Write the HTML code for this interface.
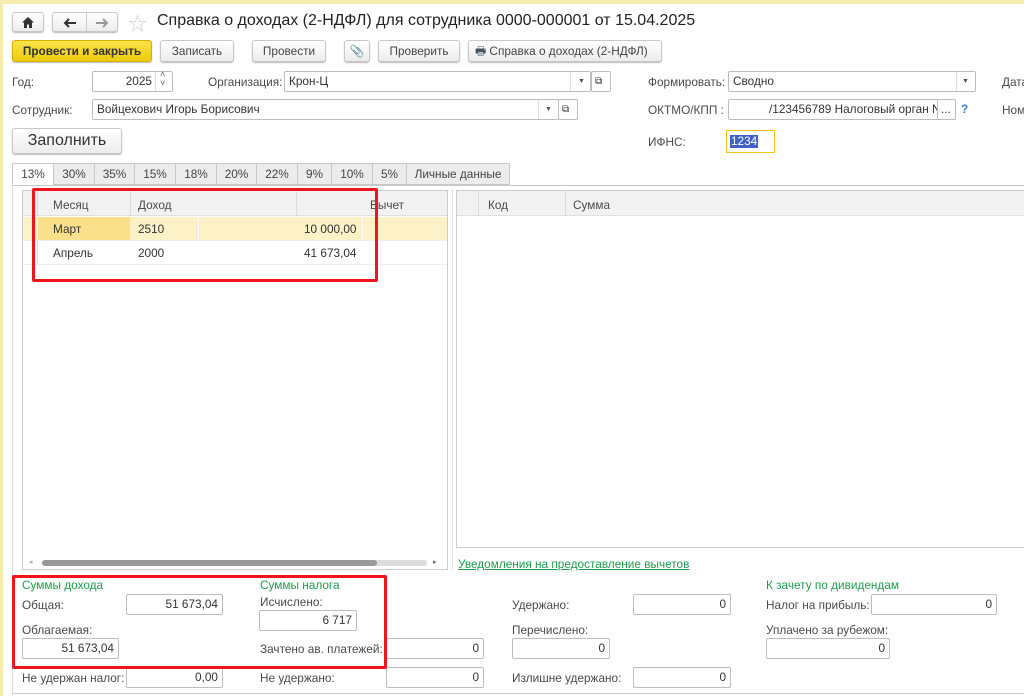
<!DOCTYPE html>
<html><head><meta charset="utf-8"><style>
*{box-sizing:border-box;margin:0;padding:0}
body{width:1024px;height:696px;overflow:hidden;background:#fff;font-family:"Liberation Sans","Noto Sans CJK SC",sans-serif;font-size:11.8px;color:#4a4a4a;position:relative}
.a{position:absolute;white-space:nowrap}
.btn{position:absolute;border:1px solid #c8c8c8;border-radius:3px;background:linear-gradient(#fff,#ececec);box-shadow:0 1px 1px #bbb;text-align:center;color:#444;font-size:11.8px;line-height:20px}
.inp{position:absolute;border:1px solid #bdbdbd;border-radius:2px;background:#fff;height:21px;line-height:19px;padding:0 4px;color:#333;font-size:11.8px;overflow:hidden}
.r{text-align:right}
.g{color:#1e9c4c}
.tab{position:absolute;top:163px;height:22px;border:1px solid #c8c8c8;background:#ececec;text-align:center;line-height:20px;color:#444}
.red{position:absolute;border:3px solid #f0141e;border-radius:2px}
.dd{position:absolute;font-size:7px;color:#555}
</style></head><body>
<div class="a" style="left:0;top:0;width:1024px;height:4px;background:#f6ebb0"></div>
<div class="a" style="left:0;top:0;width:3px;height:696px;background:#f6ebb0"></div>

<div class="btn" style="left:12px;top:12px;width:32px;height:20px"><svg width="12" height="11" viewBox="0 0 12 11" style="margin-top:4px"><path d="M6 0L0 5.5h2V11h3V7.5h2V11h3V5.5h2z" fill="#333"/></svg></div>
<div class="btn" style="left:52px;top:12px;width:66px;height:20px"><svg width="14" height="10" viewBox="0 0 14 10" style="position:absolute;left:10px;top:5px"><path d="M13 5H2M6 1L2 5l4 4" stroke="#333" stroke-width="2" fill="none"/></svg><span style="position:absolute;left:33px;top:0;width:1px;height:18px;background:#ccc"></span><svg width="14" height="10" viewBox="0 0 14 10" style="position:absolute;left:42px;top:5px"><path d="M1 5h11M8 1l4 4-4 4" stroke="#999" stroke-width="2" fill="none"/></svg></div>
<div class="a" style="left:128px;top:9px;font-size:19px;color:#cfcfcf">☆</div>
<div class="a" style="left:157px;top:12px;font-size:16px;color:#222">Справка о доходах (2-НДФЛ) для сотрудника 0000-000001 от 15.04.2025</div>

<div class="btn" style="left:12px;top:40px;width:140px;height:22px;background:linear-gradient(#fbe24a,#eccb0a);border-color:#d4b200;color:#333;font-weight:bold">Провести и закрыть</div>
<div class="btn" style="left:160px;top:40px;width:74px;height:22px">Записать</div>
<div class="btn" style="left:252px;top:40px;width:74px;height:22px">Провести</div>
<div class="btn" style="left:344px;top:40px;width:26px;height:22px;color:#777">&#128206;</div>
<div class="btn" style="left:378px;top:40px;width:82px;height:22px">Проверить</div>
<div class="btn" style="left:468px;top:40px;width:194px;height:22px;text-align:left;padding-left:6px"><span style="color:#456">&#128438;</span> Справка о доходах (2-НДФЛ)</div>

<div class="a" style="left:12px;top:75px">Год:</div>
<div class="inp r" style="left:92px;top:71px;width:81px;padding-right:20px">2025</div>
<div class="a" style="left:155px;top:72px;width:1px;height:19px;background:#ddd"></div>
<div class="a" style="left:160px;top:70px;font-size:9px;color:#666;line-height:9px">˄<br>˅</div>
<div class="a" style="left:208px;top:75px">Организация:</div>
<div class="inp" style="left:284px;top:71px;width:307px">Крон-Ц</div>
<div class="a" style="left:570px;top:72px;width:1px;height:19px;background:#ddd"></div>
<div class="dd" style="left:578px;top:78px">▼</div>
<div class="inp" style="left:591px;top:71px;width:20px;font-size:10px;padding:0 3px">⧉</div>
<div class="a" style="left:648px;top:75px">Формировать:</div>
<div class="inp" style="left:728px;top:71px;width:248px">Сводно</div>
<div class="a" style="left:956px;top:72px;width:1px;height:19px;background:#ddd"></div>
<div class="dd" style="left:962px;top:78px">▼</div>
<div class="a" style="left:1002px;top:75px">Дата</div>

<div class="a" style="left:12px;top:103px">Сотрудник:</div>
<div class="inp" style="left:92px;top:99px;width:467px">Войцехович Игорь Борисович</div>
<div class="a" style="left:538px;top:100px;width:1px;height:19px;background:#ddd"></div>
<div class="dd" style="left:545px;top:106px">▼</div>
<div class="inp" style="left:558px;top:99px;width:20px;font-size:10px;padding:0 3px">⧉</div>
<div class="a" style="left:648px;top:103px">ОКТМО/КПП :</div>
<div class="inp" style="left:728px;top:99px;width:228px;padding-left:40px">/123456789 Налоговый орган N</div>
<div class="inp" style="left:937px;top:99px;width:19px;padding:0 3px">...</div>
<div class="a" style="left:961px;top:102px;color:#3a7fd0;font-weight:bold">?</div>
<div class="a" style="left:1002px;top:103px">Ном</div>

<div class="btn" style="left:12px;top:128px;width:110px;height:26px;font-size:16px;line-height:24px;color:#333">Заполнить</div>
<div class="a" style="left:648px;top:135px">ИФНС:</div>
<div class="a" style="left:726px;top:130px;width:49px;height:23px;border:1px solid #f5c518"></div>
<div class="a" style="left:730px;top:135px;background:#3f62c4;color:#fff;line-height:13px;padding:0 1px">1234</div>

<div class="a" style="left:12px;top:185px;width:1012px;height:1px;background:#c8c8c8"></div>
<div class="tab" style="left:12px;width:42px;background:#fff;border-bottom-color:#fff">13%</div>
<div class="tab" style="left:53px;width:42px">30%</div>
<div class="tab" style="left:94px;width:41px">35%</div>
<div class="tab" style="left:134px;width:42px">15%</div>
<div class="tab" style="left:175px;width:42px">18%</div>
<div class="tab" style="left:216px;width:41px">20%</div>
<div class="tab" style="left:256px;width:42px">22%</div>
<div class="tab" style="left:297px;width:35px">9%</div>
<div class="tab" style="left:331px;width:42px">10%</div>
<div class="tab" style="left:372px;width:35px">5%</div>
<div class="tab" style="left:406px;width:104px">Личные данные</div>
<div class="a" style="left:12px;top:185px;width:1px;height:510px;background:#ddd"></div>

<div class="a" style="left:22px;top:190px;width:426px;height:380px;border:1px solid #ccc"></div>
<div class="a" style="left:23px;top:191px;width:424px;height:25px;background:#f2f2f2;border-bottom:1px solid #e0e0e0"></div>
<div class="a" style="left:37px;top:191px;width:1px;height:74px;background:#ddd"></div>
<div class="a" style="left:130px;top:191px;width:1px;height:25px;background:#ddd"></div>
<div class="a" style="left:296px;top:191px;width:1px;height:25px;background:#ddd"></div>
<div class="a" style="left:53px;top:198px">Месяц</div>
<div class="a" style="left:138px;top:198px">Доход</div>
<div class="a" style="left:370px;top:198px">Вычет</div>
<div class="a" style="left:23px;top:217px;width:424px;height:23px;background:#fdf1c7"></div>
<div class="a" style="left:38px;top:217px;width:92px;height:23px;background:#fbe08c"></div>
<div class="a" style="left:198px;top:217px;width:1px;height:23px;background:#fff"></div>
<div class="a" style="left:362px;top:217px;width:1px;height:23px;background:#fff"></div>
<div class="a" style="left:23px;top:240px;width:424px;height:1px;background:#eee"></div>
<div class="a" style="left:23px;top:264px;width:424px;height:1px;background:#eee"></div>
<div class="a" style="left:53px;top:222px;color:#333">Март</div>
<div class="a" style="left:138px;top:222px;color:#333">2510</div>
<div class="a" style="left:304px;top:222px;color:#333">10 000,00</div>
<div class="a" style="left:53px;top:246px;color:#333">Апрель</div>
<div class="a" style="left:138px;top:246px;color:#333">2000</div>
<div class="a" style="left:304px;top:246px;color:#333">41 673,04</div>
<div class="a" style="left:42px;top:560px;width:385px;height:6px;border-radius:3px;background:#ddd"></div>
<div class="a" style="left:42px;top:560px;width:335px;height:6px;border-radius:3px;background:#999"></div>
<div class="a" style="left:29px;top:558px;font-size:7px;color:#aaa">◂</div>
<div class="a" style="left:433px;top:558px;font-size:7px;color:#666">▸</div>
<div class="red" style="left:32px;top:188px;width:346px;height:94px"></div>

<div class="a" style="left:452px;top:190px;width:1px;height:380px;border-left:1px dotted #ccc"></div>
<div class="a" style="left:456px;top:190px;width:570px;height:358px;border:1px solid #ccc"></div>
<div class="a" style="left:457px;top:191px;width:568px;height:25px;background:#f2f2f2;border-bottom:1px solid #e0e0e0"></div>
<div class="a" style="left:478px;top:191px;width:1px;height:25px;background:#ddd"></div>
<div class="a" style="left:565px;top:191px;width:1px;height:25px;background:#ddd"></div>
<div class="a" style="left:488px;top:198px">Код</div>
<div class="a" style="left:573px;top:198px">Сумма</div>
<div class="a g" style="left:458px;top:557px;text-decoration:underline">Уведомления на предоставление вычетов</div>

<div class="a g" style="left:22px;top:578px">Суммы дохода</div>
<div class="a" style="left:22px;top:598px">Общая:</div>
<div class="inp r" style="left:126px;top:594px;width:97px">51 673,04</div>
<div class="a" style="left:22px;top:623px">Облагаемая:</div>
<div class="inp r" style="left:22px;top:638px;width:97px">51 673,04</div>
<div class="a g" style="left:260px;top:578px">Суммы налога</div>
<div class="a" style="left:260px;top:595px">Исчислено:</div>
<div class="inp r" style="left:259px;top:610px;width:98px">6 717</div>
<div class="a" style="left:260px;top:642px">Зачтено ав. платежей:</div>
<div class="inp r" style="left:386px;top:638px;width:98px">0</div>
<div class="a" style="left:22px;top:671px">Не удержан налог:</div>
<div class="inp r" style="left:126px;top:667px;width:97px">0,00</div>
<div class="a" style="left:260px;top:671px">Не удержано:</div>
<div class="inp r" style="left:386px;top:667px;width:98px">0</div>
<div class="a" style="left:512px;top:598px">Удержано:</div>
<div class="inp r" style="left:633px;top:594px;width:98px">0</div>
<div class="a" style="left:512px;top:623px">Перечислено:</div>
<div class="inp r" style="left:512px;top:638px;width:98px">0</div>
<div class="a" style="left:512px;top:671px">Излишне удержано:</div>
<div class="inp r" style="left:633px;top:667px;width:98px">0</div>
<div class="a g" style="left:766px;top:578px">К зачету по дивидендам</div>
<div class="a" style="left:766px;top:598px">Налог на прибыль:</div>
<div class="inp r" style="left:871px;top:594px;width:126px">0</div>
<div class="a" style="left:766px;top:623px">Уплачено за рубежом:</div>
<div class="inp r" style="left:766px;top:638px;width:124px">0</div>
<div class="red" style="left:12px;top:575px;width:375px;height:94px"></div>
<div class="a" style="left:12px;top:693px;width:1012px;height:1px;background:#ccc"></div>
</body></html>
